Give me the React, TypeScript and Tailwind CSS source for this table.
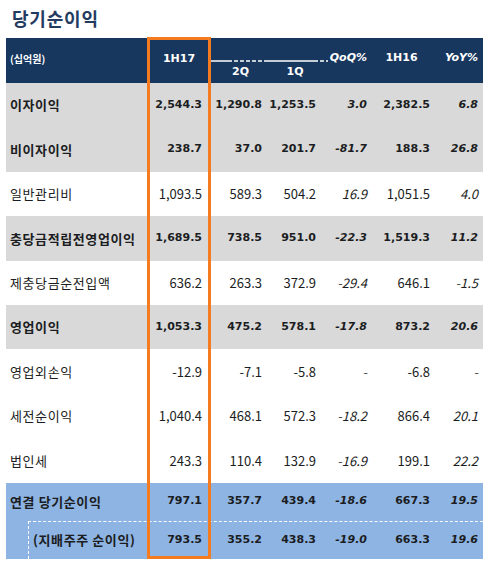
import type { ReactNode } from 'react'

type Row = {
  label: string
  vals: string[]
  bold: boolean
  bg: 'gray' | 'white' | 'blue'
}

const rows: Row[] = [
  { label: '이자이익', vals: ['2,544.3', '1,290.8', '1,253.5', '3.0', '2,382.5', '6.8'], bold: true, bg: 'gray' },
  { label: '비이자이익', vals: ['238.7', '37.0', '201.7', '-81.7', '188.3', '26.8'], bold: true, bg: 'gray' },
  { label: '일반관리비', vals: ['1,093.5', '589.3', '504.2', '16.9', '1,051.5', '4.0'], bold: false, bg: 'white' },
  { label: '충당금적립전영업이익', vals: ['1,689.5', '738.5', '951.0', '-22.3', '1,519.3', '11.2'], bold: true, bg: 'gray' },
  { label: '제충당금순전입액', vals: ['636.2', '263.3', '372.9', '-29.4', '646.1', '-1.5'], bold: false, bg: 'white' },
  { label: '영업이익', vals: ['1,053.3', '475.2', '578.1', '-17.8', '873.2', '20.6'], bold: true, bg: 'gray' },
  { label: '영업외손익', vals: ['-12.9', '-7.1', '-5.8', '-', '-6.8', '-'], bold: false, bg: 'white' },
  { label: '세전순이익', vals: ['1,040.4', '468.1', '572.3', '-18.2', '866.4', '20.1'], bold: false, bg: 'white' },
  { label: '법인세', vals: ['243.3', '110.4', '132.9', '-16.9', '199.1', '22.2'], bold: false, bg: 'white' },
]

const KR = { fontFamily: "'Noto Sans CJK KR', sans-serif" }
const NUM_BOLD = { fontFamily: "'DejaVu Sans', sans-serif" }

// column widths + right padding of each value column
const cols = ['w-[62px] pr-[8px]', 'w-[57px] pr-[5px]', 'w-[52px] pr-[3px]', 'w-[51px] pr-[3px]', 'w-[63px] pr-[3px]', 'w-[50px] pr-[5px]']

function Values({ vals, bold }: { vals: string[]; bold: boolean }) {
  return (
    <>
      {vals.map((v, i) => {
        const italic = i === 3 || i === 5
        return (
          <div
            key={i}
            className={`${cols[i]} shrink-0 text-right ${bold ? 'text-[11px] font-bold' : 'text-[13px]'} ${italic ? 'italic' : ''}`}
            style={bold ? NUM_BOLD : KR}
          >
            {v}
          </div>
        )
      })}
    </>
  )
}

function Line({ children, className }: { children: ReactNode; className: string }) {
  return <div className={`flex items-center text-[#1b1d22] ${className}`}>{children}</div>
}

export default function App() {
  return (
    <div className="relative w-[500px] h-[565px] bg-white overflow-hidden">
      {/* Title */}
      <div className="h-[38px] flex items-center pl-[12px] pb-[2px]">
        <h1 className="text-[18px] font-bold text-[#243b61] tracking-[0.8px]" style={KR}>
          당기순이익
        </h1>
      </div>

      <div className="ml-[6px] w-[477px]">
        {/* Header */}
        <div className="relative h-[45px] bg-[#17375e] text-white flex">
          <div className="w-[142px] shrink-0 flex items-center pl-[4px] pb-[4px] text-[10px] font-bold" style={KR}>
            (십억원)
          </div>
          <div className="w-[62px] shrink-0 flex items-center justify-center pb-[2px] text-[11px] font-bold" style={NUM_BOLD}>
            1H17
          </div>
          <div className="w-[57px] shrink-0 flex items-end justify-center pb-[3px] pl-[4px] text-[11px] font-bold" style={NUM_BOLD}>
            2Q
          </div>
          <div className="w-[52px] shrink-0 flex items-end justify-center pb-[3px] pl-[4px] text-[11px] font-bold" style={NUM_BOLD}>
            1Q
          </div>
          <div className="w-[51px] shrink-0 flex items-center justify-end pr-[3px] pb-[4px] text-[11px] font-bold italic" style={NUM_BOLD}>
            QoQ%
          </div>
          <div className="w-[63px] shrink-0 flex items-center justify-center pb-[4px] text-[11px] font-bold" style={NUM_BOLD}>
            1H16
          </div>
          <div className="w-[50px] shrink-0 flex items-center justify-end pr-[5px] pb-[4px] text-[11px] font-bold italic" style={NUM_BOLD}>
            YoY%
          </div>
          {/* bracket line over 2Q / 1Q */}
          <svg className="absolute left-[204px] top-[22px]" width="118" height="2">
            <line x1="0" y1="1" x2="18" y2="1" stroke="white" strokeWidth="1.5" />
            <line x1="18" y1="1" x2="54" y2="1" stroke="white" strokeWidth="1.5" strokeDasharray="4 2" />
            <line x1="54" y1="1" x2="104" y2="1" stroke="white" strokeWidth="1.5" />
            <line x1="104" y1="1" x2="118" y2="1" stroke="white" strokeWidth="1.5" strokeDasharray="4 2" />
          </svg>
        </div>

        {rows.map((r) => (
          <Line key={r.label} className={`h-[44.4px] ${r.bg === 'gray' ? 'bg-[#d9d9d9]' : 'bg-white'}`}>
            <div
              className={`w-[142px] shrink-0 pl-[4px] text-[13px] tracking-[0.6px] whitespace-nowrap ${r.bold ? 'font-bold' : ''}`}
              style={KR}
            >
              {r.label}
            </div>
            <Values vals={r.vals} bold={r.bold} />
          </Line>
        ))}

        {/* 연결 당기순이익 */}
        <Line className="h-[38px] bg-[#8eb4e3]">
          <div className="w-[142px] shrink-0 pl-[4px] text-[13px] font-bold tracking-[0.6px]" style={KR}>
            연결 당기순이익
          </div>
          <Values vals={['797.1', '357.7', '439.4', '-18.6', '667.3', '19.5']} bold />
        </Line>

        {/* 지배주주 순이익 */}
        <div className="h-[38px] bg-[#8eb4e3] flex">
          <div className="w-[22px] shrink-0" />
          <Line className="flex-1 mr-[1px] border-l border-t border-dashed border-white">
            <div className="w-[119px] shrink-0 pl-[4px] text-[13px] font-bold tracking-[0.6px]" style={KR}>
              (지배주주 순이익)
            </div>
            <Values vals={['793.5', '355.2', '438.3', '-19.0', '663.3', '19.6']} bold />
          </Line>
        </div>
      </div>

      {/* 1H17 highlight frame */}
      <div className="absolute left-[147px] top-[37px] w-[64px] h-[522px] border-[3px] border-[#f47b20] pointer-events-none" />
    </div>
  )
}
